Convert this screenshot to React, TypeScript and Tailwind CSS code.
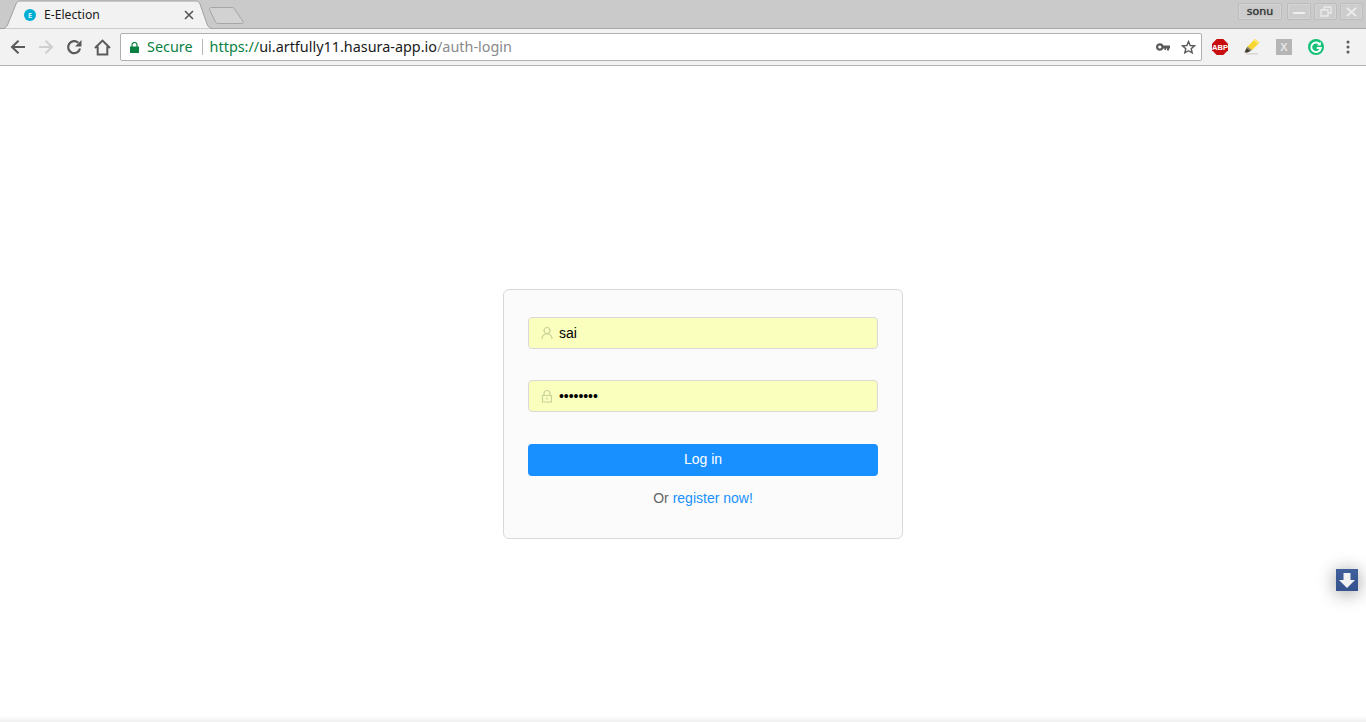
import React from "react";

const Back = () => (
  <svg width="16" height="16" viewBox="0 0 16 16" fill="none" stroke="#5a5a5a" strokeWidth="2">
    <path d="M15 8H2M8.500 1.800 2 8l6.500 6.200" />
  </svg>
);

const Forward = () => (
  <svg width="16" height="16" viewBox="0 0 16 16" fill="none" stroke="#cfcfcf" strokeWidth="2">
    <path d="M1 8h13M7.500 1.800 14 8l-6.500 6.200" />
  </svg>
);

const Reload = () => (
  <svg width="16" height="16" viewBox="0 0 16 16" fill="none">
    <path d="M14 9.500A6 6 0 1 1 12.300 3.800" stroke="#5a5a5a" strokeWidth="2.200" />
    <path d="M15.500 1v6.500H9z" fill="#5a5a5a" />
  </svg>
);

const Home = () => (
  <svg width="17" height="17" viewBox="0 0 17 17" fill="none" stroke="#5a5a5a" strokeWidth="2">
    <path d="M1 9 8.500 1.600 16 9M3.700 7.500v8h9.600v-8" />
  </svg>
);

const Lock = () => (
  <svg width="9" height="11" viewBox="0 0 9 11">
    <path d="M0 4.500h9V11H0z" fill="#0b8043" />
    <path d="M2 5V3a2.500 2.500 0 0 1 5 0v2" fill="none" stroke="#0b8043" strokeWidth="1.200" />
  </svg>
);

const Key = () => (
  <svg width="14" height="8" viewBox="0 0 14 8">
    <circle cx="3.800" cy="4" r="2.700" fill="none" stroke="#5a5a5a" strokeWidth="2.200" />
    <path d="M6.500 2.500H14v3h-1v2h-2v-2h-1v1.500H8.500V5.500h-2z" fill="#5a5a5a" />
  </svg>
);

const Star = () => (
  <svg width="15" height="15" viewBox="0 0 15 15" fill="none" stroke="#5a5a5a" strokeWidth="1.400">
    <path d="M7.500 1.600 9.200 5.500l4.200.4-3.200 2.800 1 4.200-3.700-2.200-3.700 2.200 1-4.200L1.600 5.900l4.200-.4z" />
  </svg>
);

const Abp = () => (
  <svg width="16" height="16" viewBox="0 0 16 16">
    <path d="M4.700 0h6.600L16 4.700v6.600L11.300 16H4.700L0 11.300V4.700z" fill="#c70d0d" />
    <text x="8" y="10.800" textAnchor="middle" fontSize="7.600" fontWeight="700" fontFamily="'Liberation Sans', sans-serif" fill="#fff">ABP</text>
  </svg>
);

const Marker = () => (
  <svg width="16" height="16" viewBox="0 0 16 16">
    <path d="M3.500 7.500 11 0 15.500 3.500 8 11z" fill="#f9d52f" />
    <path d="M11 0 15.500 3.500 14 5 9.500 1.500z" fill="#fbe67a" />
    <path d="M3.500 7.500 8 11l-1.500 1L2.500 9z" fill="#8f8560" />
    <path d="M2.500 9 6.500 12 3.500 13.500H.5z" fill="#3f3b2c" />
    <path d="M2 14.800h12" stroke="#d8d8d8" strokeWidth="1.600" />
  </svg>
);

const Grammarly = () => (
  <svg width="16" height="16" viewBox="0 0 16 16">
    <circle cx="8" cy="8" r="8" fill="#15c077" />
    <path d="M11.600 5A4.800 4.800 0 1 0 12.800 9H8.800" fill="none" stroke="#fff" strokeWidth="1.900" />
    <path d="M12.800 2.800v3.800H9z" fill="#fff" />
  </svg>
);

const UserIcon = () => (
  <svg width="14" height="14" viewBox="0 0 14 14" fill="none" stroke="#c9d19c" strokeWidth="1.200">
    <circle cx="7" cy="4.500" r="3" />
    <path d="M2 13c0-3 2.200-5.200 5-5.200s5 2.200 5 5.200" />
  </svg>
);

const LockIcon = () => (
  <svg width="14" height="14" viewBox="0 0 14 14" fill="none" stroke="#c9d19c" strokeWidth="1.200">
    <path d="M2.500 6.500h9v6.500h-9zM4 6.500V4.500a3 3 0 0 1 6 0v2M7 8.500v2" />
  </svg>
);

const WinButton = ({ children, w }: { children: React.ReactNode; w: string }) => (
  <div className={`flex h-[17px] items-center justify-center rounded-[2px] border border-[#bcbcbc] bg-[#cccccc] shadow-[inset_0_0_0_1px_#d4d4d4] ${w}`}>
    {children}
  </div>
);

export default function App() {
  return (
    <div className="relative h-[722px] w-[1366px] overflow-hidden bg-white font-['Liberation_Sans',sans-serif]">
      <header className="flex h-[29px] items-start justify-between border-b border-[#a8a8a8] bg-[#cacaca]">
        <div className="relative flex h-[29px] items-start">
          <svg width="250" height="29" viewBox="0 0 250 29" className="block">
            <path d="M0 28.500H3C5 28.500 6.500 27 7.500 25L16 4C17 2 18 1 20 1H196C198 1 199 2 200 4L207 24C208 27 210 28.500 213 28.500z" fill="#f2f2f2" />
            <path d="M0 28.500H3C5 28.500 6.500 27 7.500 25L16 4C17 2 18 1 20 1H196C198 1 199 2 200 4L207 24C208 27 210 28.500 213 28.500" fill="none" stroke="#a0a0a0" />
            <path d="M212 7.500H232C233 7.500 234 8 234.500 9L243 21.500C243.500 23 243 23.500 241.500 23.500H218C217 23.500 216 23 215.500 22L209.500 9.500C209 8.500 210 7.500 212 7.500z" fill="#d2d2d2" stroke="#a6a6a6" />
          </svg>
          <div className="absolute left-[24px] top-[9px] flex h-[12px] w-[12px] items-center justify-center rounded-full bg-[#00aed4] font-['Noto_Sans',sans-serif] text-[7px] font-bold leading-none text-[#d8f4fa]">E</div>
          <span className="absolute left-[44px] top-[6px] font-['Noto_Sans',sans-serif] text-[12.2px] leading-[17px] text-[#1a1a1a]">E-Election</span>
          <svg width="10" height="10" viewBox="0 0 10 10" className="absolute left-[184px] top-[10px]" stroke="#555" strokeWidth="1.600">
            <path d="M1 1l8 8M9 1l-8 8" />
          </svg>
        </div>
        <div className="mr-[3px] mt-[3px] flex items-center gap-[3px]">
          <div className="mr-[2px] flex h-[17px] w-[44px] items-center justify-center rounded-[2px] border border-[#bcbcbc] bg-[#cccccc] font-['DejaVu_Sans',sans-serif] text-[11px] leading-none text-[#333333] shadow-[inset_0_0_0_1px_#d4d4d4] [text-shadow:0_0_1px_#555]">sonu</div>
          <WinButton w="w-[24px]">
            <div className="mt-[3px] h-[2px] w-[12px] bg-[#eeeeee]" />
          </WinButton>
          <WinButton w="w-[23px]">
            <svg width="12" height="11" viewBox="0 0 12 11" fill="none" stroke="#ececec" strokeWidth="1.300">
              <path d="M1 4h7v6H1zM4 3.500V1h7v6H8.500" />
            </svg>
          </WinButton>
          <WinButton w="w-[23px]">
            <svg width="11" height="10" viewBox="0 0 11 10" stroke="#ececec" strokeWidth="1.800">
              <path d="M1 1l9 8M10 1 1 9" />
            </svg>
          </WinButton>
        </div>
      </header>

      <nav className="flex h-[37px] items-center border-b border-[#b4b4b4] bg-[#f2f2f2] pl-[10px] pr-[10px]">
        <div className="flex items-center gap-[12px]">
          <Back />
          <Forward />
          <Reload />
          <Home />
        </div>
        <div className="ml-[9px] flex h-[28px] w-[1082px] items-center rounded-[2px] border border-[#b0b0b0] bg-white pl-[9px] pr-[5px] font-['Noto_Sans',sans-serif] text-[14.4px]">
          <Lock />
          <span className="ml-[8px] text-[#0b8043]">Secure</span>
          <span className="ml-[9px] h-[16px] w-px bg-[#b8b8b8]" />
          <span className="ml-[7px] whitespace-nowrap">
            <span className="text-[#0b8043]">https://</span>
            <span className="text-[#1a1a1a]">ui.artfully11.hasura-app.io</span>
            <span className="text-[#8a8a8a]">/auth-login</span>
          </span>
          <div className="ml-auto flex items-center gap-[11px]">
            <Key />
            <Star />
          </div>
        </div>
        <div className="ml-[10px] flex items-center gap-[16px]">
          <Abp />
          <Marker />
          <div className="flex h-[16px] w-[16px] items-center justify-center bg-[#b5b5b5] text-[11px] font-bold leading-none text-[#e4e4e4]">X</div>
          <Grammarly />
          <svg width="16" height="16" viewBox="0 0 16 16" fill="#5a5a5a">
            <circle cx="8" cy="3" r="1.500" />
            <circle cx="8" cy="8" r="1.500" />
            <circle cx="8" cy="13" r="1.500" />
          </svg>
        </div>
      </nav>

      <main className="flex justify-center pl-[40px] pt-[223px]">
        <form className="h-[250px] w-[400px] rounded-[6px] border border-[#d9d9d9] bg-[#fbfbfb] px-[24px] pt-[27px] text-[14px]">
          <div className="flex h-[32px] items-center rounded-[4px] border border-[#d9d9d9] bg-[#faffbd] pl-[11px]">
            <UserIcon />
            <span className="ml-[5px] text-[14px] text-black">sai</span>
          </div>
          <div className="mt-[31px] flex h-[32px] items-center rounded-[4px] border border-[#d9d9d9] bg-[#faffbd] pl-[11px]">
            <LockIcon />
            <span className="ml-[5px] text-[14px] tracking-[-0.05px] text-black">••••••••</span>
          </div>
          <button type="button" className="mt-[32px] block h-[32px] w-full rounded-[4px] bg-[#1890ff] pb-[2px] text-[14px] text-white">Log in</button>
          <p className="mt-[11px] text-center leading-[22px] text-[#666666]">
            Or <span className="text-[#1890ff]">register now!</span>
          </p>
        </form>
      </main>

      <div className="absolute left-[1336px] top-[569px] flex h-[22px] w-[22px] items-center justify-center bg-gradient-to-b from-[#3f5f9c] to-[#34528c] shadow-[0_2px_18px_rgba(0,0,0,0.4)]">
        <svg width="16" height="15" viewBox="0 0 16 15">
          <path d="M4.500 0h7v7H16l-8 8-8-8h4.500z" fill="#f2f2f2" />
        </svg>
      </div>
      <div className="absolute bottom-0 left-0 h-[6px] w-full bg-gradient-to-b from-white to-[#f0f0f0]" />
    </div>
  );
}
